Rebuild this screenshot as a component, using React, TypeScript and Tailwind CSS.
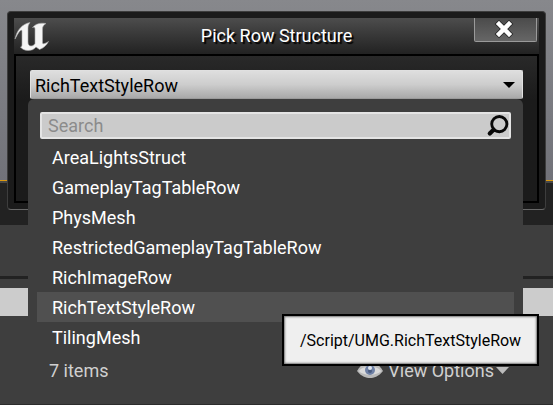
import React, { useState } from "react";

const structures = [
  "AreaLightsStruct",
  "GameplayTagTableRow",
  "PhysMesh",
  "RestrictedGameplayTagTableRow",
  "RichImageRow",
  "RichTextStyleRow",
  "TilingMesh",
];

function EngineLogo() {
  return (
    <svg width="36" height="30" viewBox="0 0 36 30" aria-hidden="true" className="shrink-0">
      <path
        d="M1 18C3 9 8 3 16 1.500C14.500 3.500 14 5 14 7.500V21C14 23.500 15 25 17 25C19 25 20 24 21 22.500V8C21 6 20 6 18.500 6.500C21.500 3 25.500 1.500 32 2.500C29.500 4 28.500 5.500 28.500 8V21.500C28.500 23.500 30.500 23 34.500 20.500C32.500 24.500 29.500 27 25.500 28.500L22 26C20 28.500 17.500 29.500 14 29.500C10.500 29.500 8 28 6.500 26C8 26 8 24.500 8 23V10.500C8 8.500 7 9 5.500 10.500C3.500 13 2.500 15.500 1 18Z"
        fill="#f5f5f5"
        stroke="#a8a8a8"
        strokeOpacity="0.6"
        strokeLinejoin="round"
      />
    </svg>
  );
}

function CloseIcon() {
  return (
    <svg width="20" height="20" viewBox="0 0 20 20" aria-hidden="true">
      <path d="M5 5L15 15M15 5L5 15" stroke="#222" strokeWidth="6" strokeLinecap="square" />
      <path d="M5 5L15 15M15 5L5 15" stroke="#fff" strokeWidth="4.500" strokeLinecap="square" />
    </svg>
  );
}

function SearchIcon() {
  return (
    <svg width="24" height="24" viewBox="0 0 24 24" fill="none" aria-hidden="true">
      <circle cx="14" cy="10" r="8" stroke="#080808" strokeWidth="3" />
      <path d="M8 16L4 20" stroke="#080808" strokeWidth="4.500" strokeLinecap="round" />
    </svg>
  );
}

function EyeIcon() {
  return (
    <svg width="26" height="18" viewBox="0 0 26 18" aria-hidden="true">
      <path d="M0 9C5 1 9 0 13 0S21 1 26 9C21 15 17 16 13 16S5 15 0 9Z" fill="#b9b9b9" />
      <path d="M2 9C6 3 20 3 24 9C20 14 6 14 2 9Z" fill="#dadada" />
      <circle cx="13" cy="8" r="5" fill="#6f81a6" />
      <circle cx="13" cy="9" r="2" fill="#4a5c80" />
      <circle cx="13" cy="6" r="2" fill="#dfe5ee" />
    </svg>
  );
}

function Backdrop() {
  return (
    <div className="flex min-h-screen flex-col bg-[#3e3e3e]" aria-hidden="true">
      <div className="h-[180px] bg-linear-to-b from-[#87888c] to-[#717279]" />
      <div className="h-px bg-[#dc9a12]" />
      <div className="h-0.5 bg-[#484848]" />
      <div className="h-[42px] bg-[#222222]" />
      <div className="h-[51px]" />
      <div className="h-[3px] bg-[#222222]" />
      <div className="h-[9px]" />
      <div className="h-7 bg-[#cccccc]" />
      <div className="flex-1 border-b border-[#2c2c2c]" />
    </div>
  );
}

function StructurePicker() {
  const [selected, setSelected] = useState("RichTextStyleRow");
  return (
    <div className="relative mx-3.5">
      <div className="relative">
        <select
          aria-label="Row structure"
          value={selected}
          onChange={(e) => setSelected(e.target.value)}
          className="block h-[29px] w-full appearance-none rounded-xs border border-[#e0e0e0] border-b-[#9a9a9a] bg-linear-to-b from-[#dedede] via-[#cdcdcd] to-[#a9a9a9] pt-0.5 pl-1 text-lg leading-6 text-black outline-none"
        >
          {structures.map((name) => (
            <option key={name}>{name}</option>
          ))}
        </select>
        <svg
          width="12"
          height="6"
          viewBox="0 0 12 6"
          aria-hidden="true"
          className="pointer-events-none absolute top-3 right-2"
        >
          <path d="M0 0H12L6 6Z" fill="#000" />
        </svg>
      </div>

      <div className="absolute top-full right-0 -left-0.5 rounded-t-md rounded-b-xs bg-[#3e3e3e] pt-[13px] pb-3">
        <div className="mx-3 flex h-[27px] items-center rounded-xs border-2 border-[#e4e4e4] bg-[#cbcbcb]">
          <input
            type="search"
            aria-label="Search"
            placeholder="Search"
            className="w-full min-w-0 bg-transparent pl-1.5 text-lg leading-6 text-black outline-none placeholder:text-[#8b8b8b]"
          />
          <SearchIcon />
        </div>

        <ul role="listbox" aria-label="Structures" className="mx-[9px] mt-[3px]">
          {structures.map((name) => (
            <li key={name} role="presentation" className="relative">
              <button
                type="button"
                role="option"
                aria-selected={name === selected}
                onClick={() => setSelected(name)}
                className="flex h-[30px] w-full items-center pt-0.5 pl-[15px] text-lg leading-6 text-white aria-selected:bg-[#505050]"
              >
                {name}
              </button>
              {name === selected && (
                <div
                  role="tooltip"
                  className="absolute top-[22px] left-[245px] z-10 border-2 border-black bg-[#efefef] px-4 pt-[13px] pb-[11px] text-base leading-6 whitespace-nowrap text-black shadow-[inset_0_0_2px_1px_#777777]"
                >
                  /Script/UMG.{name}
                </div>
              )}
            </li>
          ))}
        </ul>

        <div className="mt-[7px] flex h-[31px] items-start justify-between pr-3.5 pl-[21px] text-lg leading-6 text-[#d0d0d0]">
          <span>7 items</span>
          <button type="button" className="flex items-center">
            <EyeIcon />
            <span className="ml-[5px]">View Options</span>
            <svg width="13" height="8" viewBox="0 0 13 8" aria-hidden="true" className="ml-0.5">
              <path d="M0 0H13L6.500 7Z" fill="#bcbcbc" />
            </svg>
          </button>
        </div>
      </div>
    </div>
  );
}

export default function App() {
  return (
    <main className="relative min-h-screen overflow-hidden font-[Roboto,sans-serif]">
      <Backdrop />
      <section
        role="dialog"
        aria-labelledby="dialog-title"
        className="absolute inset-x-[7px] top-[11px] rounded-sm border border-[#3d3d3d] border-b-[#686868] bg-[#1b1b1b] p-1.5"
      >
        <header className="relative flex h-9 items-center justify-between bg-linear-to-b from-[#4d4d4d] to-[#222222]">
          <EngineLogo />
          <h1
            id="dialog-title"
            className="absolute inset-x-0 text-center text-lg leading-6 text-white [text-shadow:2px_2px_1px_#000]"
          >
            Pick Row Structure
          </h1>
          <button
            type="button"
            aria-label="Close"
            className="relative mr-0.5 flex h-6 w-[63px] items-center justify-center self-start rounded-b-xs border border-t-0 border-[#9a9a9a] bg-linear-to-b from-[#4b4b4b] to-[#666666] pr-1 pb-0.5"
          >
            <CloseIcon />
          </button>
        </header>
        <div className="border-2 border-black bg-linear-to-b from-[#292929] to-[#1b1b1b] to-30% pt-3.5 pb-[102px]">
          <StructurePicker />
        </div>
      </section>
    </main>
  );
}
